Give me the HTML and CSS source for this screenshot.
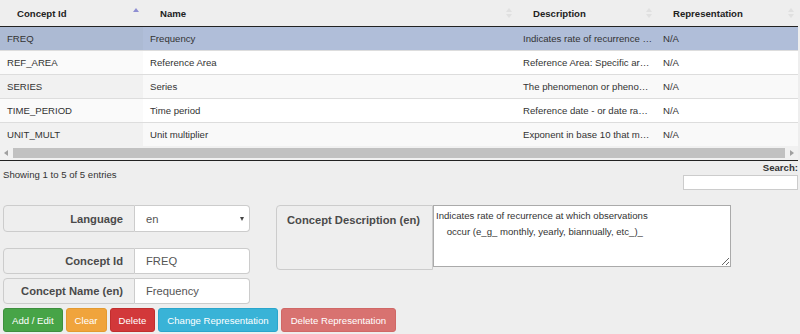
FILE: index.html
```
<!DOCTYPE html>
<html lang="en">
<head>
    <meta charset="UTF-8">
    <meta name="viewport" content="width=device-width, initial-scale=1.0">
    <title>Concepts</title>
    <link rel="stylesheet" href="styles.css">
</head>
<body>
    <div class="table-wrap">
        <table class="grid">
            <colgroup>
                <col class="c-id">
                <col class="c-name">
                <col class="c-desc">
                <col class="c-rep">
            </colgroup>
            <thead>
                <tr>
                    <th><div class="th-inner"><span>Concept Id</span>
                        <svg class="sort" width="6" height="10" viewBox="0 0 6 10"><polygon points="0,4 3,0 6,4" fill="#8e8ed2"/></svg></div></th>
                    <th><div class="th-inner"><span>Name</span>
                        <svg class="sort" width="6" height="10" viewBox="0 0 6 10"><polygon points="0,4 3,0 6,4" fill="#e0e0e0"/><polygon points="0,6 3,10 6,6" fill="#e0e0e0"/></svg></div></th>
                    <th><div class="th-inner"><span>Description</span>
                        <svg class="sort" width="6" height="10" viewBox="0 0 6 10"><polygon points="0,4 3,0 6,4" fill="#e0e0e0"/><polygon points="0,6 3,10 6,6" fill="#e0e0e0"/></svg></div></th>
                    <th><div class="th-inner"><span>Representation</span>
                        <svg class="sort" width="6" height="10" viewBox="0 0 6 10"><polygon points="0,4 3,0 6,4" fill="#e0e0e0"/><polygon points="0,6 3,10 6,6" fill="#e0e0e0"/></svg></div></th>
                </tr>
            </thead>
            <tbody>
                <tr class="selected">
                    <td>FREQ</td><td>Frequency</td><td>Indicates rate of recurrence …</td><td>N/A</td>
                </tr>
                <tr class="even">
                    <td>REF_AREA</td><td>Reference Area</td><td>Reference Area: Specific ar…</td><td>N/A</td>
                </tr>
                <tr class="odd">
                    <td>SERIES</td><td>Series</td><td>The phenomenon or pheno…</td><td>N/A</td>
                </tr>
                <tr class="even">
                    <td>TIME_PERIOD</td><td>Time period</td><td>Reference date - or date ra…</td><td>N/A</td>
                </tr>
                <tr class="odd">
                    <td>UNIT_MULT</td><td>Unit multiplier</td><td>Exponent in base 10 that m…</td><td>N/A</td>
                </tr>
            </tbody>
        </table>
        <div class="hscroll">
            <svg width="4" height="6" viewBox="0 0 4 6"><polygon points="4,0 0,3 4,6" fill="#a0a0a0"/></svg>
            <div class="thumb"></div>
            <svg width="4" height="6" viewBox="0 0 4 6"><polygon points="0,0 4,3 0,6" fill="#a0a0a0"/></svg>
        </div>
    </div>

    <div class="table-footer">
        <div class="info">Showing 1 to 5 of 5 entries</div>
        <div class="search">
            <label for="search">Search:</label>
            <input type="text" id="search">
        </div>
    </div>

    <div class="form">
        <div class="left-col">
            <div class="input-group lang">
                <span class="addon">Language</span>
                <div class="select"><span>en</span><span class="caret"></span></div>
            </div>
            <div class="input-group id-group">
                <span class="addon">Concept Id</span>
                <input type="text" class="field" value="FREQ">
            </div>
            <div class="input-group">
                <span class="addon">Concept Name (en)</span>
                <input type="text" class="field" value="Frequency">
            </div>
        </div>
        <div class="desc-group">
            <span class="addon">Concept Description (en)</span>
            <textarea class="desc">Indicates rate of recurrence at which observations
    occur (e_g_ monthly, yearly, biannually, etc_)_</textarea>
        </div>
    </div>

    <div class="buttons">
        <button class="btn green">Add / Edit</button>
        <button class="btn orange">Clear</button>
        <button class="btn red">Delete</button>
        <button class="btn blue">Change Representation</button>
        <button class="btn pale-red">Delete Representation</button>
    </div>
</body>
</html>
```

FILE: styles.css
```
body {
    margin: 0;
    background: #eeeeee;
    font-family: "Liberation Sans", Arial, sans-serif;
    color: #333;
}

.table-wrap {
    width: 798px;
    border-bottom: 1px solid #222;
}

.grid {
    width: 798px;
    table-layout: fixed;
    border-collapse: collapse;
    font-size: 9.6px;
}

.c-id { width: 143px; }
.c-name { width: 373px; }
.c-desc { width: 140px; }
.c-rep { width: 142px; }

.grid th {
    height: 26px;
    padding: 0;
    text-align: left;
    font-weight: bold;
    color: #222;
    border-bottom: 1px solid #222;
}

.th-inner {
    display: flex;
    justify-content: space-between;
    align-items: center;
    padding: 0 4px 0 17px;
}

.sort {
    display: block;
}

.grid td {
    height: 23px;
    padding: 0 7px;
    white-space: nowrap;
    overflow: hidden;
    color: #333;
    background: #fff;
}

.grid tbody tr + tr td {
    border-top: 1px solid #dddddd;
}

.grid tr.selected td { background: #b0bed9; }
.grid tr.selected td:first-child { background: #acbad3; }
.grid tr.even td:first-child { background: #fafafa; }
.grid tr.odd td { background: #f9f9f9; }
.grid tr.odd td:first-child { background: #f1f1f1; }

.hscroll {
    height: 14px;
    background: #f1f1f1;
    display: flex;
    align-items: center;
    gap: 5px;
    padding: 0 4px 0 4px;
}

.thumb {
    flex: 1;
    height: 10px;
    background: #c1c1c1;
}

.table-footer {
    display: flex;
    justify-content: space-between;
    width: 798px;
    font-size: 9.6px;
}

.info {
    padding: 8px 0 0 3px;
}

.search {
    display: flex;
    flex-direction: column;
    align-items: flex-end;
}

.search label {
    font-weight: bold;
    padding-top: 1px;
    line-height: 11px;
}

.search input {
    width: 113px;
    height: 13px;
    margin-top: 2px;
    padding: 0;
    border: 1px solid #cccccc;
    background: #fff;
}

.form {
    display: flex;
    align-items: flex-start;
    margin-top: 15px;
    padding-left: 3px;
}

.left-col {
    width: 247px;
}

.input-group {
    display: flex;
    height: 26px;
    margin-top: 4px;
}

.input-group.lang {
    margin-top: 0;
    height: 27px;
}

.input-group.id-group {
    margin-top: 16px;
}

.addon {
    width: 132px;
    box-sizing: border-box;
    padding-right: 11px;
    display: flex;
    align-items: center;
    justify-content: flex-end;
    background: #eeeeee;
    border: 1px solid #cccccc;
    border-radius: 4px 0 0 4px;
    font-size: 11.2px;
    font-weight: bold;
    color: #4a4a4a;
}

.select,
.field {
    flex: 1;
    box-sizing: border-box;
    border: 1px solid #cccccc;
    border-left: none;
    border-radius: 0 4px 4px 0;
    background: #fff;
    color: #555;
    font-family: inherit;
    font-size: 11.2px;
    padding: 0 11px;
    margin: 0;
    min-width: 0;
}

.select {
    display: flex;
    align-items: center;
    justify-content: space-between;
    padding: 0 5px 0 11px;
}

.caret {
    width: 0;
    height: 0;
    border-left: 2.5px solid transparent;
    border-right: 2.5px solid transparent;
    border-top: 4px solid #444;
}

.desc-group {
    display: flex;
    align-items: flex-start;
    margin-left: 26px;
}

.desc-group .addon {
    width: 157px;
    height: 65px;
    padding: 8px 0 0 10px;
    align-items: flex-start;
    justify-content: flex-start;
}

.desc {
    width: 298px;
    height: 62px;
    box-sizing: border-box;
    margin: 0;
    padding: 2px 2px;
    border: 1px solid #aaaaaa;
    background: #fff;
    font-family: inherit;
    font-size: 9.6px;
    line-height: 16px;
    color: #333;
}

.buttons {
    display: flex;
    gap: 3px;
    margin-top: 4px;
    padding-left: 3px;
}

.btn {
    height: 24px;
    padding: 0 8px;
    border: 1px solid transparent;
    border-radius: 3px;
    color: #fff;
    font-family: inherit;
    font-size: 9.6px;
    cursor: pointer;
}

.green { background: #47a447; border-color: #3e8f3e; }
.orange { background: #f0a43c; border-color: #e39a30; }
.red { background: #d2383a; border-color: #c12e2e; }
.blue { background: #39b3d7; border-color: #2aa6cc; }
.pale-red { background: #d87270; border-color: #d06866; padding: 0 9px; }
```
